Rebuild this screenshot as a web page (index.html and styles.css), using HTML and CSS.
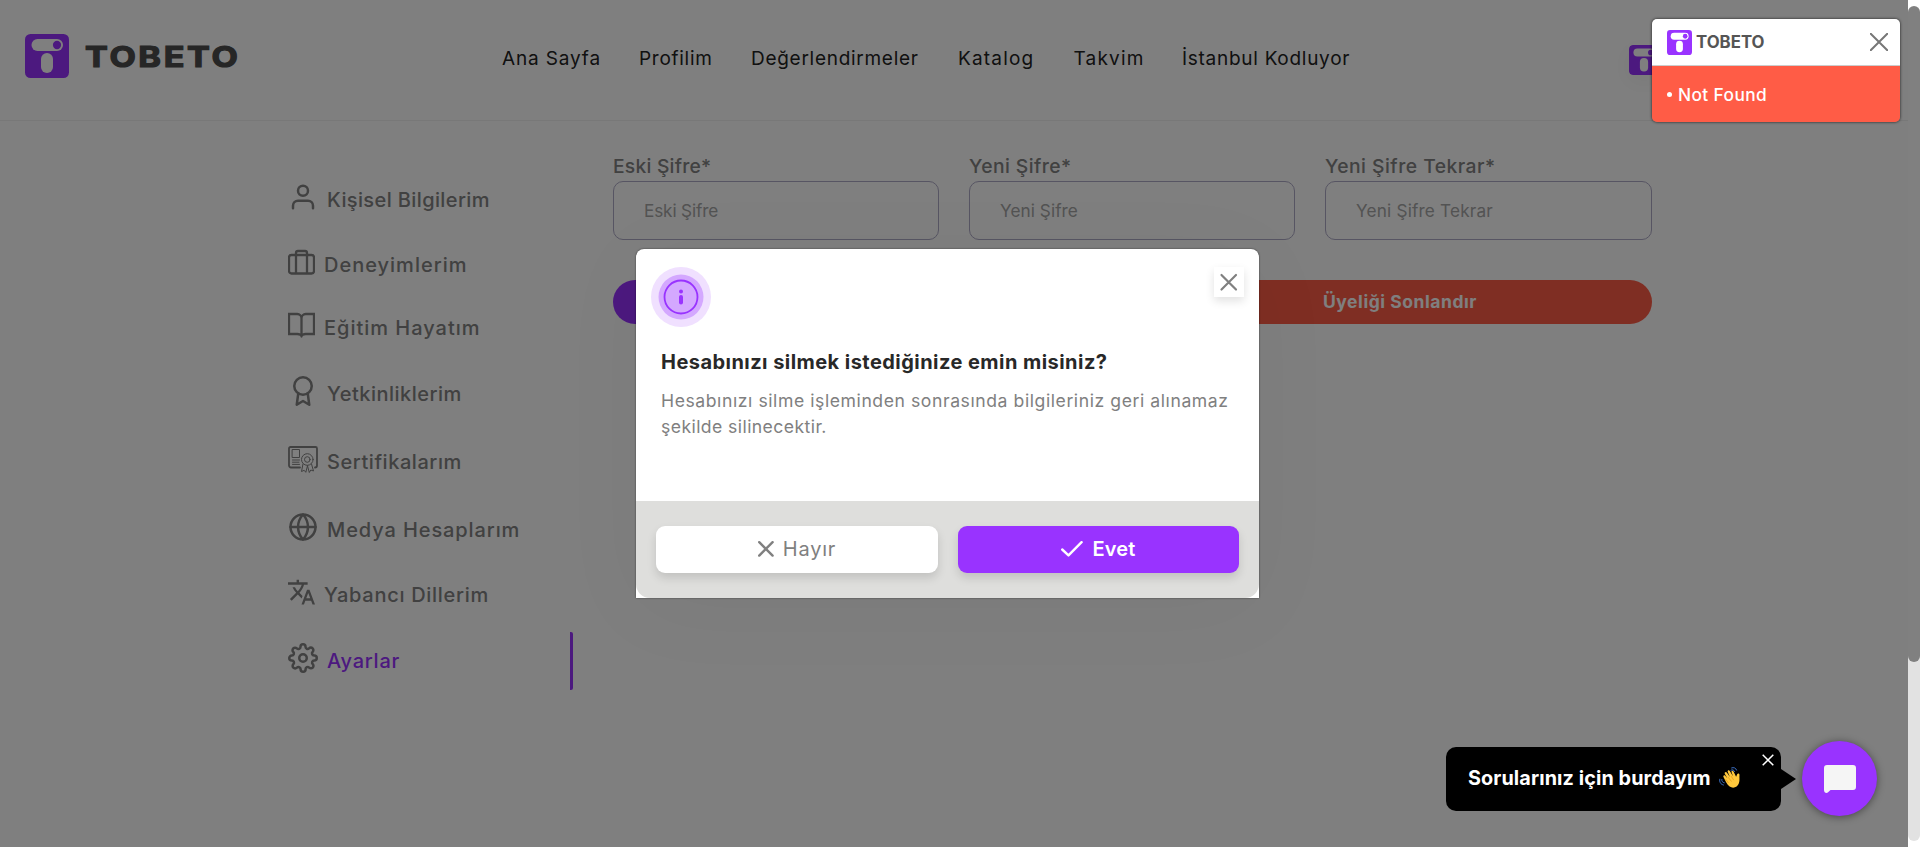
FILE: index.html
```html
<!DOCTYPE html>
<html lang="tr">
<head>
<meta charset="utf-8">
<title>Tobeto</title>
<link rel="stylesheet" href="styles.css">
</head>
<body>
<svg class="defs" width="0" height="0">
  <symbol id="mark" viewBox="0 0 44 44" preserveAspectRatio="none">
    <rect width="44" height="44" rx="5.5" fill="#9933ff"/>
    <rect x="6.5" y="5" width="31.5" height="12" rx="6" fill="#fff"/>
    <ellipse cx="32" cy="11" rx="4.1" ry="4.2" fill="#9933ff"/>
    <rect x="16" y="19" width="12" height="20" rx="6" fill="#fff"/>
  </symbol>
</svg>

<div class="page">
  <header class="header">
    <div class="brand">
      <svg class="brand-mark"><use href="#mark"/></svg>
      <span class="brand-name">TOBETO</span>
    </div>
    <nav class="nav">
      <a class="n1">Ana Sayfa</a><a class="n2">Profilim</a><a class="n3">Değerlendirmeler</a><a class="n4">Katalog</a><a class="n5">Takvim</a><a class="n6">İstanbul Kodluyor</a>
    </nav>
    <div class="profile"><svg class="profile-mark"><use href="#mark"/></svg></div>
  </header>

  <main class="main">
    <aside class="side">
      <a class="item s1"><svg class="ico" viewBox="0 0 24 24"><path d="M20 21v-2a4 4 0 0 0-4-4H8a4 4 0 0 0-4 4v2"/><circle cx="12" cy="7" r="4"/></svg><span>Kişisel Bilgilerim</span></a>
      <a class="item s2"><svg class="ico narrow" viewBox="0 0 27 30"><rect x="1" y="8" width="25" height="18.5" rx="2.5"/><path d="M8 26V6a2 2 0 0 1 2-2h7a2 2 0 0 1 2 2v20"/></svg><span>Deneyimlerim</span></a>
      <a class="item s3"><svg class="ico narrow" viewBox="0 0 27 30"><path d="M13.500 26.500V8.200a4.200 4.200 0 0 0-4.200-4.200H1v20h8.300a4.200 2.200 0 0 1 4.200 2.200a4.200 2.200 0 0 1 4.200-2.200H26V4h-8.300a4.200 4.200 0 0 0-4.200 4.200"/></svg><span>Eğitim Hayatım</span></a>
      <a class="item s4"><svg class="ico" viewBox="0 0 24 24"><circle cx="12" cy="8" r="7"/><path d="M8.210 13.890L7 23l5-3 5 3-1.210-9.120"/></svg><span>Yetkinliklerim</span></a>
      <a class="item s5"><svg class="ico thin" viewBox="0 0 30 30"><path class="edge" d="M12 23.500H3a2 2 0 0 1-2-2V4.500a1.500 1.500 0 0 1 1.500-1.500h25A1.500 1.500 0 0 1 29 4.500v17a2 2 0 0 1-2 2"/><path d="M4.500 5.500h7v8h-7zM4.500 16h7M4.500 18.200h6.500M4.500 20.400h7"/><circle cx="19.300" cy="15.500" r="5.800"/><circle cx="19.300" cy="15.500" r="2.800"/><path d="M15 20l-1.500 7.500 2.700-1.200 1.600 2 1.700-6.500M23.500 20l2 7-2.700-1-1.500 2.500-1.800-6.700"/></svg><span>Sertifikalarım</span></a>
      <a class="item s6"><svg class="ico" viewBox="0 0 24 24"><circle cx="12" cy="12" r="10"/><path d="M2 12h20M12 2a15.300 15.300 0 0 1 4 10 15.300 15.300 0 0 1-4 10 15.300 15.300 0 0 1-4-10 15.300 15.300 0 0 1 4-10z"/></svg><span>Medya Hesaplarım</span></a>
      <a class="item s7"><svg class="ico narrow solid" viewBox="1 -0.300 22 24.400"><path d="M12.870 15.070l-2.540-2.510.030-.030c1.740-1.940 2.980-4.170 3.710-6.530H17V4h-7V2H8v2H1v1.990h11.170C11.500 7.920 10.440 9.750 9 11.350 8.070 10.320 7.300 9.190 6.690 8h-2c.730 1.630 1.730 3.170 2.980 4.560l-5.090 5.020L4 19l5-5 3.110 3.110.760-2.040zM18.500 10h-2L12 22h2l1.120-3h4.750L21 22h2l-4.500-12zm-2.620 7l1.620-4.330L19.120 17h-3.240z"/></svg><span>Yabancı Dillerim</span></a>
      <a class="item s8 active"><svg class="ico" viewBox="0 0 24 24"><circle cx="12" cy="12" r="3"/><path d="M19.400 15a1.650 1.650 0 0 0 .33 1.820l.06.06a2 2 0 0 1 0 2.830 2 2 0 0 1-2.830 0l-.06-.06a1.650 1.650 0 0 0-1.820-.33 1.650 1.650 0 0 0-1 1.510V21a2 2 0 0 1-2 2 2 2 0 0 1-2-2v-.09A1.650 1.650 0 0 0 9 19.400a1.650 1.650 0 0 0-1.820.33l-.06.06a2 2 0 0 1-2.830 0 2 2 0 0 1 0-2.830l.06-.06a1.650 1.650 0 0 0 .33-1.820 1.650 1.650 0 0 0-1.510-1H3a2 2 0 0 1-2-2 2 2 0 0 1 2-2h.09A1.650 1.650 0 0 0 4.600 9a1.650 1.650 0 0 0-.33-1.820l-.06-.06a2 2 0 0 1 0-2.830 2 2 0 0 1 2.830 0l.06.06a1.650 1.650 0 0 0 1.820.33H9a1.650 1.650 0 0 0 1-1.510V3a2 2 0 0 1 2-2 2 2 0 0 1 2 2v.09a1.650 1.650 0 0 0 1 1.510 1.650 1.650 0 0 0 1.820-.33l.06-.06a2 2 0 0 1 2.830 0 2 2 0 0 1 0 2.830l-.06.06a1.650 1.650 0 0 0-.33 1.820V9a1.650 1.650 0 0 0 1.510 1H21a2 2 0 0 1 2 2 2 2 0 0 1-2 2h-.09a1.650 1.650 0 0 0-1.510 1z"/></svg><span>Ayarlar</span></a>
    </aside>

    <section class="form">
      <div class="fields">
        <label class="field f1"><span>Eski Şifre*</span><input type="password" placeholder="Eski Şifre"></label>
        <label class="field f2"><span>Yeni Şifre*</span><input type="password" placeholder="Yeni Şifre"></label>
        <label class="field f3"><span>Yeni Şifre Tekrar*</span><input type="password" placeholder="Yeni Şifre Tekrar"></label>
      </div>
      <div class="actions">
        <button class="pill change">Şifre Değiştir</button>
        <button class="pill remove">Üyeliği Sonlandır</button>
      </div>
    </section>
  </main>
</div>

<div class="scrim"></div>

<div class="modal">
  <div class="modal-body">
    <div class="modal-top">
      <svg class="info" viewBox="0 0 60 60"><circle cx="30" cy="30" r="30" fill="#f0e0ff"/><circle cx="30" cy="30" r="22.500" fill="#d4a8ff"/><circle cx="30" cy="30" r="16.500" fill="none" stroke="#9933ff" stroke-width="1.800"/><circle cx="30" cy="24.500" r="2" fill="#9933ff"/><rect x="28" y="28" width="4" height="9.500" rx="2" fill="#9933ff"/></svg>
      <button class="close"><svg width="30" height="30" viewBox="0 0 30 30"><path d="M7.500 8l14.500 14.500M22 8L7.500 22.500" stroke="#808080" stroke-width="2.200" stroke-linecap="round"/></svg></button>
    </div>
    <h2 class="title">Hesabınızı silmek istediğinize emin misiniz?</h2>
    <p class="text">Hesabınızı silme işleminden sonrasında bilgileriniz geri alınamaz <span>şekilde silinecektir.</span></p>
  </div>
  <div class="modal-foot">
    <button class="btn no"><svg width="16" height="16" viewBox="0 0 16 16"><path d="M1.200 1.200l13.400 13.400M14.600 1.200L1.200 14.600"/></svg><span>Hayır</span></button>
    <button class="btn yes"><svg width="22" height="16" viewBox="0 0 22 16"><path d="M1.200 8.500l6.300 5.900L20.600 1.200"/></svg><span>Evet</span></button>
  </div>
</div>

<div class="toast">
  <div class="toast-head">
    <svg class="toast-mark"><use href="#mark"/></svg>
    <strong>TOBETO</strong>
    <svg class="toast-x" width="18" height="18" viewBox="0 0 18 18"><path d="M.700.700l16.600 16.600M17.300.700L.700 17.300" stroke="#777" stroke-width="2" stroke-linecap="round"/></svg>
  </div>
  <div class="toast-body"><i></i>Not Found</div>
</div>

<div class="chat">
  <div class="bubble">
    <span>Sorularınız için burdayım</span>
    <svg class="wave" width="22" height="22" viewBox="0 0 22 22">
      <path d="M3.500 9.500c-.8-1.300.9-2.400 1.800-1.200L7.500 11 4.800 6.300c-.7-1.500 1.200-2.500 2-1.200L9.900 9.500 7.700 4.300c-.5-1.400 1.400-2.200 2.100-.8L13 8.800 11.500 4.500c-.3-1.400 1.500-1.900 2-.6l2.600 5.300 1.200-2.600c.8-1.300 2.400-.5 2.200.8-.3 2.300.5 5.200-.6 8.400-1.300 4-5.700 5.600-9.300 3.300C7 17.300 5 12.700 3.500 9.500z" fill="#ffc83d" transform="translate(1 .5)"/>
      <path d="M6.500 12l3 4M9 10l3.500 4.500M12 9l2.800 4.200" stroke="#e09a1a" stroke-width=".7" fill="none"/>
      <path d="M12 3.200c1.300-.9 3-.3 3.600 1.300M12.600.9c2.200-.9 4.300.1 5 2.200M2.800 12.500c-.3 1.700.7 3 2.400 3.300M.8 12.200c-.7 3 1 5.200 3.600 5.800" stroke="#3c6fc4" stroke-width="1" fill="none" stroke-linecap="round"/>
    </svg>
    <svg class="bubble-x" width="12" height="12" viewBox="0 0 12 12"><path d="M.700.700l10.600 10.600M11.300.700L.700 11.300" stroke="#fff" stroke-width="1.500"/></svg>
  </div>
  <div class="arrow"></div>
  <div class="launcher"><svg width="32" height="28" viewBox="0 0 32 28"><path d="M3 0h26a3 3 0 0 1 3 3v19a3 3 0 0 1-3 3H6.500l-2.700 2.600C2 28.500 0 27.500 0 25V3a3 3 0 0 1 3-3z" fill="#f5f5f5"/></svg></div>
</div>

<div class="scrollbar"><div class="thumb"></div></div>
</body>
</html>
```
FILE: styles.css
```css
* { box-sizing: border-box; }
html, body { height: 100%; overflow: hidden; }
body { margin: 0; font-family: Inter, "Open Sans", sans-serif; background: #fff; position: relative; }
.defs { position: absolute; }
button { font-family: inherit; border: 0; padding: 0; }

.page { width: 1908px; height: 847px; }
.header { height: 121px; border-bottom: 1px solid #f0f0f0; display: flex; align-items: flex-start; padding-left: 25px; }
.brand { display: flex; width: 477px; padding-top: 34px; gap: 16px; }
.brand-mark { width: 44px; height: 44px; }
.brand-name { font-size: 28.500px; line-height: 45px; font-weight: 700; letter-spacing: 2.200px; color: #4d4d4d; -webkit-text-stroke: 1.200px #4d4d4d; transform: scaleX(1.200); transform-origin: 0 50%; }
.nav { display: grid; grid-template-columns: 137px 112px 207px 115.500px 108.500px 200px; padding-top: 44px; font-size: 19px; line-height: 30px; color: #222; }
.nav a { white-space: nowrap; }
.n1 { letter-spacing: .850px; }
.n2, .n3, .n6 { letter-spacing: .720px; }
.n4, .n5 { letter-spacing: 1.200px; }
.profile { padding: 45px 0 0 247px; }
.profile-mark { width: 30px; height: 30px; display: block; border-radius: 4px; box-shadow: 0 6px 24px rgba(0, 0, 0, .06); }

.main { display: flex; gap: 40px; padding-left: 288px; }
.side { width: 285px; padding-top: 64px; display: grid; grid-template-rows: 65px 63px 66px 68px 68px 65px 66px 44px; }
.item { display: flex; gap: 9px; color: #828282; font-size: 20px; line-height: 30px; font-weight: 500; white-space: nowrap; }
.ico { width: 30px; height: 30px; margin-top: -3px; fill: none; stroke: #828282; stroke-width: 2; stroke-linecap: round; stroke-linejoin: round; flex: none; }
.narrow { width: 27px; }
.solid { fill: #828282; stroke: none; }
.thin { stroke-width: 1; }
.edge { stroke-width: 1.800; }
.s2 .ico, .s3 .ico { stroke-width: 2.300; }
.s3 .ico { stroke-linejoin: miter; }
.s1 { letter-spacing: .380px; }
.s2 { letter-spacing: 1px; }
.s3 { letter-spacing: .980px; }
.s4 { letter-spacing: .500px; }
.s5 { letter-spacing: .560px; }
.s6 { letter-spacing: .900px; }
.s7 { letter-spacing: .710px; }
.s8 { letter-spacing: .750px; }
.active { color: #9933ff; margin-top: -14px; padding-top: 14px; border-right: 3px solid #9933ff; border-radius: 0 2px 2px 0; }

.form { width: 1039px; padding-top: 30px; }
.fields { display: grid; grid-template-columns: 326px 326px 327px; gap: 30px; }
.field { display: flex; flex-direction: column; }
.field span { font-size: 19.300px; line-height: 30px; font-weight: 500; color: #828282; }
.field input { height: 59px; border: 1px solid #aeaac6; border-radius: 10px; background: transparent; padding: 0 30px 1px; font: 400 17.200px Inter, sans-serif; outline: 0; }
.field input::placeholder { color: #a6a6a6; opacity: 1; }
.f1 span { letter-spacing: .220px; }
.f2 span { letter-spacing: .430px; }
.f3 span { letter-spacing: .480px; }
.f1 input { letter-spacing: -.150px; }
.f2 input { letter-spacing: .060px; }
.f3 input { letter-spacing: .180px; }
.actions { display: grid; grid-template-columns: 504px 504px; gap: 31px; padding-top: 40px; }
.pill { height: 44px; border-radius: 22px; color: #fff; font-size: 17.500px; font-weight: 700; letter-spacing: .550px; padding-bottom: 2px; }
.change { background: #9933ff; }
.remove { background: #ff5c46; }

.scrim { position: absolute; inset: 0 12px 0 0; background: rgba(0, 0, 0, .5); }

.modal { position: absolute; left: 636px; top: 249px; width: 623px; height: 349px; background: #fff; border-radius: 8px 8px 0 0; box-shadow: 0 0 2px rgba(0, 0, 0, .6), 0 10px 90px rgba(0, 0, 0, .04); display: flex; flex-direction: column; }
.modal-body { height: 252px; padding: 18px 15px 0 15px; }
.modal-top { display: flex; justify-content: space-between; height: 78px; }
.info { width: 60px; height: 60px; }
.close { width: 30px; height: 30px; background: #fff; box-shadow: 0 4px 10px rgba(0, 0, 0, .12); }
.close svg { display: block; }
.title { margin: 0 0 0 10px; font-size: 20px; line-height: 34px; font-weight: 700; letter-spacing: .450px; color: #282828; white-space: nowrap; }
.text { margin: 9px 0 0 10px; font-size: 17.600px; line-height: 26px; letter-spacing: .570px; color: #808080; white-space: nowrap; }
.text span { display: block; letter-spacing: .420px; }
.modal-foot { flex: 1; background: #dededc; border-radius: 0 0 14px 14px; display: grid; grid-template-columns: 282px 281px; gap: 20px; padding: 25px 20px; }
.btn { height: 47px; border-radius: 9px; display: flex; align-items: center; justify-content: center; gap: 9px; font-size: 20px; padding-bottom: 1px; box-shadow: 0 5px 10px rgba(0, 0, 0, .13); }
.btn path { fill: none; stroke: currentColor; stroke-width: 2.400; stroke-linecap: round; stroke-linejoin: round; }
.no { background: #fff; color: #808080; letter-spacing: .780px; }
.yes { background: #9933ff; color: #fff; font-weight: 600; letter-spacing: .200px; }

.toast { position: absolute; left: 1652px; top: 19px; width: 248px; height: 103px; border-radius: 5px; overflow: hidden; box-shadow: 0 0 3px rgba(0, 0, 0, .8); display: flex; flex-direction: column; }
.toast-head { height: 47px; background: #fff; border-bottom: 1px solid #ccc; display: flex; align-items: center; padding: 0 12px 0 15px; }
.toast-mark { width: 25px; height: 25px; margin-right: 4px; }
.toast-head strong { flex: 1; font-size: 16.800px; font-weight: 700; letter-spacing: 0; color: #555; }
.toast-body { flex: 1; background: #ff5c46; color: #fff; font-size: 17.300px; font-weight: 500; letter-spacing: .400px; display: flex; align-items: center; padding-left: 15px; gap: 6px; }
.toast-body i { width: 5px; height: 5px; border-radius: 50%; background: #fff; }

.chat { position: absolute; left: 1446px; top: 741px; display: flex; align-items: center; }
.bubble { position: relative; width: 335px; height: 64px; background: #000; border-radius: 10px; color: #fff; font-size: 19.800px; font-weight: 700; letter-spacing: .100px; display: flex; align-items: center; gap: 8px; padding: 0 0 1px 22px; white-space: nowrap; }
.bubble-x { position: absolute; right: 7px; top: 7px; }
.arrow { border-left: 15px solid #000; border-top: 10px solid transparent; border-bottom: 10px solid transparent; }
.launcher { width: 75px; height: 75px; margin-left: 6px; border-radius: 50%; background: #9933ff; box-shadow: 0 1px 8px rgba(0, 0, 0, .45); display: flex; align-items: center; justify-content: center; }

.scrollbar { position: absolute; right: 0; top: 0; width: 12px; height: 847px; background: linear-gradient(#fff 12px, #e2e2e2 12px, #e2e2e2 829px, #fff 829px); padding-top: 6px; }
.scrollbar::after { content: ""; position: absolute; left: 0; bottom: 6px; width: 12px; height: 20px; background: #e2e2e2; border-radius: 0 0 6px 6px; }
.thumb { width: 12px; height: 656px; border-radius: 6px; background: #808080; }
```
